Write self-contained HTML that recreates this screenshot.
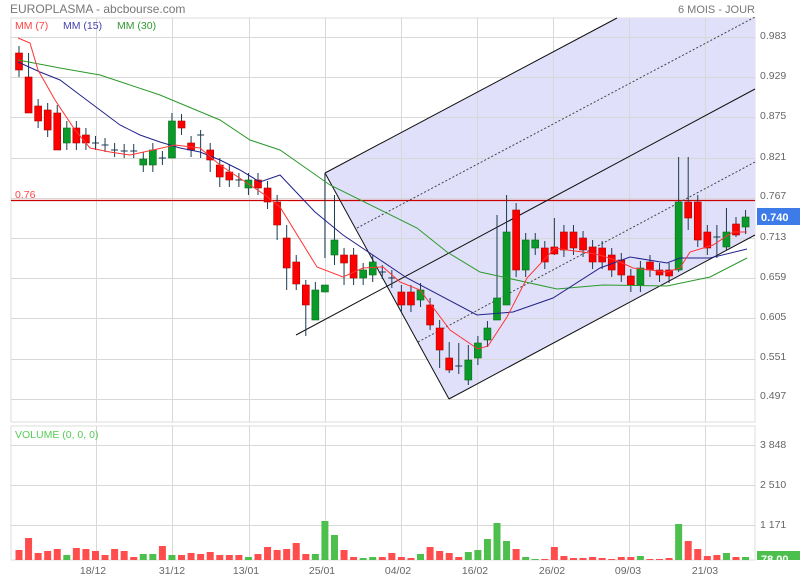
<!DOCTYPE html>
<html><head><meta charset="utf-8"><style>
body{margin:0;width:800px;height:580px;background:#fff;overflow:hidden;font-family:"Liberation Sans",sans-serif}
svg{position:absolute;left:0;top:0}
</style></head><body>
<svg id="s" width="800" height="580" xmlns="http://www.w3.org/2000/svg" font-family="Liberation Sans, sans-serif">
<text x="10" y="13" font-size="12" fill="#777">EUROPLASMA - abcbourse.com</text>
<text x="755" y="13" font-size="11" fill="#777" text-anchor="end">6 MOIS - JOUR</text>
<rect x="11" y="18" width="744" height="404" fill="#fff" stroke="#ddd"/>
<rect x="11" y="426" width="744" height="134" fill="#fff" stroke="#ddd"/>
<polygon points="325,173 617,18 755,18 755,235 449,399" fill="#e0e0fa"/>
<g id="grid" stroke="#d8d8d8" stroke-width="1"></g>
<text x="15" y="29" font-size="10.5" fill="#f44">MM (7)</text>
<text x="63" y="29" font-size="10.5" fill="#44a">MM (15)</text>
<text x="117" y="29" font-size="10.5" fill="#393">MM (30)</text>
<text x="15" y="438" font-size="10.5" fill="#5c5">VOLUME (0, 0, 0)</text>
<line x1="11" y1="200.5" x2="755" y2="200.5" stroke="#c00" stroke-width="1.2"/>
<text x="15" y="198" font-size="10.5" fill="#f44">0.76</text>
<g id="pf" stroke="#111" stroke-width="1" fill="none">
<line x1="325" y1="173" x2="617" y2="18"/>
<line x1="449" y1="399" x2="755" y2="235"/>
<line x1="296" y1="335" x2="755" y2="89"/>
<line x1="325" y1="173" x2="449" y2="399"/>
<line x1="357" y1="228" x2="755" y2="17" stroke-dasharray="2,2" stroke="#444"/>
<line x1="418" y1="342" x2="755" y2="162" stroke-dasharray="2,2" stroke="#444"/>
</g>
<g id="c"></g>
<g id="v"></g>
<polyline fill="none" stroke="#2a9a2a" stroke-width="1" points="18,60 60,68 100,75 160,95 220,120 250,140 280,150 330,185 417,228 447,252 480,272 557,289 603,285 667,286 710,277 747,258"/>
<polyline fill="none" stroke="#22228a" stroke-width="1" points="18,62 40,72 60,80 80,95 100,110 120,125 140,135 160,142 180,148 200,152 220,160 240,170 260,182 280,175 315,212 343,235 407,278 477,315 513,312 553,298 600,268 630,257 667,263 680,258 710,258 747,249"/>
<polyline fill="none" stroke="#f33" stroke-width="1" points="18,38 30,43 38,70 55,100 75,130 90,148 110,152 130,155 153,150 175,145 200,148 220,165 250,185 265,195 280,207 317,267 343,277 363,268 383,267 400,282 420,290 450,330 478,349 488,346 507,317 527,278 555,248 567,250 583,252 600,255 620,262 633,268 667,272 680,268 690,252 713,245 733,232 747,232"/>
<g font-size="10.5" fill="#666">
<text x="760" y="39">0.983</text><text x="760" y="79">0.929</text><text x="760" y="119">0.875</text><text x="760" y="160">0.821</text><text x="760" y="199">0.767</text><text x="760" y="240">0.713</text><text x="760" y="280">0.659</text><text x="760" y="320">0.605</text><text x="760" y="360">0.551</text><text x="760" y="399">0.497</text>
<text x="760" y="448">3 848</text><text x="760" y="488">2 510</text><text x="760" y="528">1 171</text>
</g>
<rect x="757" y="208" width="43" height="17" fill="#3d7be8"/>
<text x="761" y="221" font-size="11" font-weight="bold" fill="#fff">0.740</text>
<rect x="757" y="551" width="43" height="9" fill="#4cbf4c"/>
<text x="761" y="563" font-size="11" font-weight="bold" fill="#fff">78.00</text>
<g font-size="10.5" fill="#666" text-anchor="middle">
<text x="93" y="574">18/12</text><text x="172" y="574">31/12</text><text x="246" y="574">13/01</text><text x="322" y="574">25/01</text><text x="398" y="574">04/02</text><text x="475" y="574">16/02</text><text x="552" y="574">26/02</text><text x="628" y="574">09/03</text><text x="705" y="574">21/03</text>
</g>
</svg>
<script>
var NS="http://www.w3.org/2000/svg";
function el(p,t,a){var e=document.createElementNS(NS,t);for(var k in a)e.setAttribute(k,a[k]);p.appendChild(e);return e;}
var g=document.getElementById('grid');
[96,172,249,325,401,477,553,629,705].forEach(function(x){el(g,'line',{x1:x+.5,y1:18,x2:x+.5,y2:422});el(g,'line',{x1:x+.5,y1:426,x2:x+.5,y2:560});});
for(var k=0;k<10;k++){var y=Math.round(37+40.2*k)+.5;el(g,'line',{x1:11,y1:y,x2:755,y2:y});}
[445.5,485.5,525.5].forEach(function(y){el(g,'line',{x1:11,y1:y,x2:755,y2:y});});
var C=[['r',53,70],['r',77,113],['r',106,121],['r',110,130],['r',113,150],['g',128,143],['r',128,143],['r',135,143],['d',143],['d',145],['d',150],['d',151],['d',151],['g',159,165],['g',150,165],['d',158],['g',121,158],['r',121,128],['r',143,150],['d',135],['r',150,160],['r',165,177],['r',172,180],['d',180],['g',180,188],['r',180,188],['r',188,202],['r',202,225],['r',238,268],['r',262,284],['r',285,305],['g',290,320],['g',285,292],['g',240,255],['r',255,263],['r',255,278],['g',270,278],['g',262,275],['d',272],['d',278],['r',292,305],['r',292,305],['g',290,300],['r',305,325],['r',328,350],['r',358,370],['d',366],['g',360,380],['g',343,358],['g',328,340],['g',298,320],['g',232,305],['r',210,270],['g',240,270],['g',240,248],['r',248,262],['r',247,254],['r',232,250],['r',232,248],['r',238,250],['r',247,262],['r',248,262],['r',255,270],['r',260,275],['r',276,285],['g',268,285],['r',262,270],['r',270,275],['r',270,276],['g',202,270],['r',202,218],['r',202,240],['r',232,248],['d',237],['g',232,247],['r',224,235],['g',217,227]];
var O={1:[53,113],4:[105,150],16:[113,158],19:[130,158],20:[143,172],21:[158,187],27:[195,240],28:[225,290],29:[255,290],30:[280,336],31:[282,320],32:[173,258],33:[195,265],34:[248,285],39:[270,288],43:[298,330],44:[320,368],45:[342,373],46:[343,374],47:[345,385],50:[215,305],51:[195,285],56:[218,255],69:[157,272],70:[157,230],73:[225,258],74:[208,250],75:[217,237]};
var V=[550,538,553,551,549,555,548,549,551,555,549,551,557,554,554,546,555,555,553,554,552,555,555,555,557,554,547,550,549,543,554,554,521,535,550,557,558,557,557,553,557,558,554,547,551,553,557,552,550,539,523,541,549,557,559,559,547,556,558,558,557,558,559,557,557,556,559,559,558,524,541,549,556,555,553,557,557];
var cg=document.getElementById('c'),vg=document.getElementById('v');
for(var i=0;i<C.length;i++){
 var x=19+9.56*i,c=C[i];
 var b2=c[2]||c[1];
 var w=O[i]||[c[1]-7,b2+7];
 var col=c[0]=='g'?'#0a9a2a':'#f00',bd=c[0]=='g'?'#0a6a1a':'#a00';
 el(cg,'line',{x1:x,y1:w[0],x2:x,y2:w[1],stroke:'#1a3a50','stroke-width':1});
 if(c[0]=='d'){el(cg,'line',{x1:x-3.5,y1:c[1],x2:x+3.5,y2:c[1],stroke:'#1a3a50'});}
 else el(cg,'rect',{x:x-3.5,y:c[1],width:7,height:c[2]-c[1],fill:col,stroke:bd,'stroke-width':.6});
 var vy=V[i]; var vc=c[0]=='g'?'#4cbf4c':'#ff4d4d';
 el(vg,'rect',{x:x-3.5,y:vy,width:7,height:560-vy,fill:vc});
}
</script>
</body></html>
